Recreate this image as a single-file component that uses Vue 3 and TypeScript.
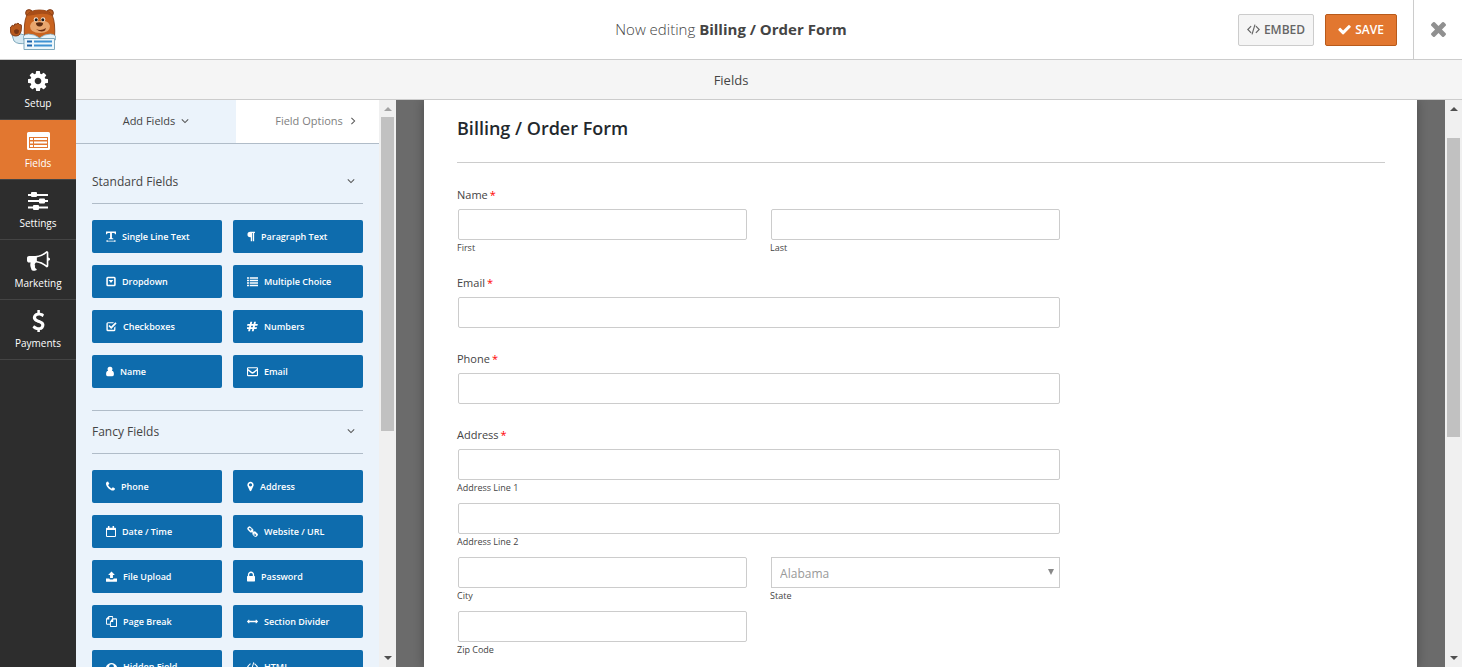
<script setup lang="ts">
import { ref } from 'vue'

interface Icon {
  box: string
  width: number
  d: string
  evenodd?: boolean
}

interface FieldButton {
  label: string
  icon: string
}

interface FieldGroup {
  title: string
  fields: FieldButton[]
}

interface NavItem {
  label: string
  icon: string
}

const navItems: NavItem[] = [
  { label: 'Setup', icon: 'gear' },
  { label: 'Fields', icon: 'list' },
  { label: 'Settings', icon: 'sliders' },
  { label: 'Marketing', icon: 'bullhorn' },
  { label: 'Payments', icon: 'dollar' },
]

const navIcons: Record<string, Icon> = {
  gear: {
    box: '128 128 1536 1536',
    width: 20,
    d: 'M1152 896q0-106-75-181t-181-75-181 75-75 181 75 181 181 75 181-75 75-181zm512-109v222q0 12-8 23t-20 13l-185 28q-19 54-39 91 35 50 107 138 10 12 10 25t-9 23q-27 37-99 108t-94 71q-12 0-26-9l-138-108q-44 23-91 38-16 136-29 186-7 28-36 28h-222q-14 0-24.5-8.5t-11.5-21.5l-28-184q-49-16-90-37l-141 107q-10 9-25 9-14 0-25-11-126-114-165-168-7-10-7-23 0-12 8-23 15-21 51-66.500t54-70.500q-27-50-41-99l-183-27q-13-2-21-12.500t-8-23.500v-222q0-12 8-23t19-13l186-28q14-46 39-92-40-57-107-138-10-12-10-24 0-10 9-23 26-36 98.500-107.500t94.500-71.500q13 0 26 10l138 107q44-23 91-38 16-136 29-186 7-28 36-28h222q14 0 24.500 8.500t11.500 21.500l28 184q49 16 90 37l142-107q9-9 24-9 13 0 25 10 129 119 165 170 7 8 7 22 0 12-8 23-15 21-51 66.500t-54 70.500q26 50 41 98l183 28q13 2 21 12.500t8 23.500z',
  },
  list: {
    box: '0 0 23 18',
    width: 23,
    evenodd: true,
    d: 'M1.500 0h20a1.500 1.500 0 0 1 1.500 1.500v15a1.500 1.500 0 0 1-1.500 1.500h-20a1.500 1.500 0 0 1-1.500-1.500v-15a1.500 1.500 0 0 1 1.500-1.500zM2 5v11h19v-11zM3 6h3v2h-3zM7 6h13v2h-13zM3 9.500h3v2h-3zM7 9.500h13v2h-13zM3 13h3v2h-3zM7 13h13v2h-13z',
  },
  sliders: {
    box: '0 0 20 18',
    width: 20,
    d: 'M0 2h3v2h-3zM9 2h11v2h-11zM4 0h4a1 1 0 0 1 1 1v3a1 1 0 0 1-1 1h-4a1 1 0 0 1-1-1v-3a1 1 0 0 1 1-1zM0 8h11v2h-11zM17 8h3v2h-3zM12 6.500h4a1 1 0 0 1 1 1v3a1 1 0 0 1-1 1h-4a1 1 0 0 1-1-1v-3a1 1 0 0 1 1-1zM0 14.500h5v2h-5zM11 14.500h9v2h-9zM6 13h4a1 1 0 0 1 1 1v3a1 1 0 0 1-1 1h-4a1 1 0 0 1-1-1v-3a1 1 0 0 1 1-1z',
  },
  bullhorn: {
    box: '0 128 1792 1536',
    width: 23,
    d: 'M1664 640q53 0 90.500 37.500t37.500 90.500-37.500 90.500-90.500 37.500v384q0 52-38 90t-90 38q-417-347-812-380-58 19-91 66t-31 100.500 40 92.500q-20 33-23 65.500t6 58 33.500 55 48 50 61.500 50.500q-29 58-111.500 83t-168.500 11.500-132-55.500q-7-23-29.500-87.500t-32-94.500-23-89-15-101 3.500-98.500 22-110.500h-122q-66 0-113-47t-47-113v-192q0-66 47-113t113-47h480q435 0 896-384 52 0 90 38t38 90v384zm-128 604v-954q-394 302-768 343v270q377 42 768 341z',
  },
  dollar: {
    box: '384 0 1024 1792',
    width: 13,
    d: 'M1362 1185q0 153-99.500 263.500t-258.500 136.500v175q0 14-9 23t-23 9h-135q-13 0-22.500-9.500t-9.500-22.500v-175q-66-9-127.500-31t-101.500-44.500-74-48-46.500-37.500-17.500-18q-17-21-2-41l103-135q7-10 23-12 15-2 24 9l2 2q113 99 243 125 37 8 74 8 81 0 142.500-43t61.500-122q0-28-15-53t-33.500-42-58.500-37.500-66-32-80-32.500q-39-16-61.500-25t-61.500-26.500-62.500-31-56.500-35.500-53.500-42.500-43.500-49-35.500-58-21-66.500-8.500-78q0-138 98-242t255-134v-180q0-13 9.500-22.500t22.500-9.500h135q14 0 23 9t9 23v176q57 6 110.500 23t87 33.500 63.500 37.500 39 29 15 14q17 18 5 38l-81 146q-8 15-23 16-14 3-27-7-3-3-14.500-12t-39-26.500-58.500-32-74.500-26-85.500-11.500q-95 0-155 43t-60 111q0 26 8.500 48t29.500 41.500 39.500 33 56 31 60.500 27 70 27.500q53 20 81 31.500t76 35 75.500 42.500 62 50 53 63.500 31.500 76.500 13 94z',
  },
}

const fieldIcons: Record<string, Icon> = {
  text: {
    box: '0 0 13 14',
    width: 10,
    d: 'M0 0.500h13v3.500h-1.200q-.3-1.700-1.800-1.700h-2.300v6.200q0 1 1.800 1v1h-6v-1q1.800 0 1.800-1v-6.200h-2.300q-1.500 0-1.800 1.700h-1.200zM0 13l2-1.700v1.100h9v-1.100l2 1.700-2 1.500v-1h-9v1z',
  },
  paragraph: {
    box: '0 0 10 14',
    width: 8,
    d: 'M4 1h6v1.500h-1v10.500h-1.700v-10.500h-.9v10.500h-1.700v-5h-.7a3.500 3.500 0 0 1 0-7z',
  },
  dropdown: {
    box: '0 0 12 14',
    width: 10,
    evenodd: true,
    d: 'M2 1h8a2 2 0 0 1 2 2v8a2 2 0 0 1-2 2h-8a2 2 0 0 1-2-2v-8a2 2 0 0 1 2-2zM2 3v8h8v-8zM3 5h6l-3 4z',
  },
  choices: {
    box: '0 0 14 14',
    width: 11,
    d: 'M0 1.500h2.500v2h-2.500zM3.500 1.500h10.500v2h-10.500zM0 4.800h2.500v2h-2.500zM3.500 4.800h10.500v2h-10.500zM0 8h2.500v2h-2.500zM3.500 8h10.500v2h-10.500zM0 11.200h2.500v2h-2.500zM3.500 11.200h10.500v2h-10.500z',
  },
  check: {
    box: '0 0 13 14',
    width: 11,
    d: 'M2 1.500h7.500l-1 1.500h-6.700v8.200h8v-2.700l1.700-1.700v4.200a2 2 0 0 1-2 2h-7.500a2 2 0 0 1-2-2v-7.500a2 2 0 0 1 2-2zM2.500 6.500l1.500-1.500 2.100 2.100 5.300-5.400 1.600 1.600-6.900 7z',
  },
  hash: {
    box: '0 0 14 14',
    width: 11,
    evenodd: true,
    d: 'M4.300 1h2.400l-.7 2.800h2.300l.7-2.800h2.400l-.7 2.800h3.100l-.6 2.400h-3l-.4 1.600h3l-.6 2.400h-3l-.7 2.800h-2.400l.7-2.800h-2.300l-.7 2.800h-2.400l.7-2.800h-3.100l.6-2.400h3l.4-1.600h-3l.6-2.400h3zM5.400 6.200l-.4 1.600h2.300l.4-1.600z',
  },
  user: {
    box: '0 0 10 14',
    width: 8,
    d: 'M5 1a3 3 0 0 1 2.400 5q2.600.3 2.600 4.500 0 2.500-2 2.500h-6q-2 0-2-2.500 0-4.200 2.600-4.500a3 3 0 0 1 2.400-5z',
  },
  envelope: {
    box: '0 0 14 14',
    width: 11,
    evenodd: true,
    d: 'M1.500 1.500h11a1.500 1.500 0 0 1 1.500 1.500v8.500a1.500 1.500 0 0 1-1.500 1.500h-11a1.500 1.500 0 0 1-1.500-1.500v-8.500a1.500 1.500 0 0 1 1.500-1.500zM1.400 2.900v.9l4.600 3.600q1 .7 2 0l4.600-3.600v-.9zM1.400 6v5.600h11.200v-5.600l-3.900 3.200q-1.700 1.200-3.400 0z',
  },
  phone: {
    box: '192 128 1408 1536',
    width: 9,
    d: 'M1600 1240q0 27-10 70.500t-21 68.500q-21 50-122 106-94 51-186 51-27 0-53-3.500t-57.500-12.500-47-14.500-55.500-20.500-49-18q-98-35-175-83-127-79-264-216t-216-264q-48-77-83-175-3-9-18-49t-20.500-55.500-14.500-47-12.500-57.500-3.500-53q0-92 51-186 56-101 106-122 25-11 68.500-21t70.500-10q14 0 21 3 18 6 53 76 11 19 30 54t35 63.500 31 53.500q3 4 17.500 25t21.500 35.500 7 28.500q0 20-28.500 50t-62 55-62 53-28.500 46q0 9 5 22.500t8.500 20.500 14 24 11.500 19q76 137 174 235t235 174q2 1 19 11.500t24 14 20.500 8.500 22.500 5q18 0 46-28.500t53-62 55-62 50-28.500q14 0 28.500 7t35.500 21.500 25 17.500q25 15 53.500 31t63.500 35 54 30q70 35 76 53 3 7 3 21z',
  },
  marker: {
    box: '384 0 1024 1792',
    width: 7,
    d: 'M1152 640q0-106-75-181t-181-75-181 75-75 181 75 181 181 75 181-75 75-181zm256 0q0 109-33 179l-364 774q-16 33-47.500 52t-67.500 19-67.500-19-46.500-52l-365-774q-33-70-33-179 0-212 150-362t362-150 362 150 150 362z',
  },
  calendar: {
    box: '0 0 13 14',
    width: 10,
    evenodd: true,
    d: 'M2.500 0h2v2h4v-2h2v2h1.500a1 1 0 0 1 1 1v10a1 1 0 0 1-1 1h-11a1 1 0 0 1-1-1v-10a1 1 0 0 1 1-1h1.500zM1.300 5v7.700h10.400v-7.700z',
  },
  link: {
    box: '0 0 14 14',
    width: 11,
    evenodd: true,
    d: 'M4 .5l3.500 3.200q1.200 1.300.3 2.700l.8.800q1.500-.9 2.700.3l2 2q1.300 1.500 0 2.800l-1 1q-1.400 1.200-2.800 0l-2-2q-1.200-1.300-.3-2.700l-.8-.8q-1.500.9-2.700-.3l-2.800-2.800q-1.200-1.500 0-2.800l1-1.100q1-.9 2.100-.3zM3.300 2.200l-1.200 1.200 2.700 2.700.6-.3-.8-1 .8-.8 1 .8.200-.7zM9.600 8.800l-.2.600.9.900-.8.800-.9-.9-.2.700 2 2 1.300-1.200z',
  },
  upload: {
    box: '0 0 14 14',
    width: 11,
    d: 'M7 .5l4.300 4.500h-2.500v4h-3.600v-4h-2.500zM0 9.500h4.200q.3 1.300 1.500 1.300h2.600q1.200 0 1.500-1.300h4.200v3.500a.7.7 0 0 1-.7.700h-12.600a.7.7 0 0 1-.7-.7z',
  },
  lock: {
    box: '320 128 1152 1408',
    width: 8,
    d: 'M640 768h512v-192q0-106-75-181t-181-75-181 75-75 181v192zm832 96v576q0 40-28 68t-68 28h-960q-40 0-68-28t-28-68v-576q0-40 28-68t68-28h32v-192q0-184 132-316t316-132 316 132 132 316v192h32q40 0 68 28t28 68z',
  },
  copy: {
    box: '0 0 14 14',
    width: 11,
    evenodd: true,
    d: 'M3.500 0h4.500a1 1 0 0 1 1 1v2h4a1 1 0 0 1 1 1v9a1 1 0 0 1-1 1h-7a1 1 0 0 1-1-1v-2h-4a1 1 0 0 1-1-1v-6.500zM4.200 1.300v3h-3v5.500h3.800v-2.500l3-4v-2zM9.200 4.300v3.200h-3v5.200h6.500v-8.400z',
  },
  arrows: {
    box: '0 448 1792 896',
    width: 11,
    d: 'M1792 896q0 26-19 45l-256 256q-19 19-45 19t-45-19-19-45v-128h-1024v128q0 26-19 45t-45 19-45-19l-256-256q-19-19-19-45t19-45l256-256q19-19 45-19t45 19 19 45v128h1024v-128q0-26 19-45t45-19 45 19l256 256q19 19 19 45z',
  },
  eye: {
    box: '0 0 14 14',
    width: 11,
    evenodd: true,
    d: 'M7 2.500q4.500 0 7 4.500-2.500 4.500-7 4.500t-7-4.500q2.500-4.500 7-4.500zM7 4a3 3 0 1 0 0 6 3 3 0 0 0 0-6z',
  },
  code: {
    box: '0 0 14 14',
    width: 11,
    d: 'M4 3l.9.9-3.100 3.100 3.100 3.100-.9.900-4-4zM10 3l4 4-4 4-.9-.9 3.100-3.100-3.100-3.100zM8 1.500l1.200.3-3.200 10.700-1.200-.3z',
  },
}

const groups: FieldGroup[] = [
  {
    title: 'Standard Fields',
    fields: [
      { label: 'Single Line Text', icon: 'text' },
      { label: 'Paragraph Text', icon: 'paragraph' },
      { label: 'Dropdown', icon: 'dropdown' },
      { label: 'Multiple Choice', icon: 'choices' },
      { label: 'Checkboxes', icon: 'check' },
      { label: 'Numbers', icon: 'hash' },
      { label: 'Name', icon: 'user' },
      { label: 'Email', icon: 'envelope' },
    ],
  },
  {
    title: 'Fancy Fields',
    fields: [
      { label: 'Phone', icon: 'phone' },
      { label: 'Address', icon: 'marker' },
      { label: 'Date / Time', icon: 'calendar' },
      { label: 'Website / URL', icon: 'link' },
      { label: 'File Upload', icon: 'upload' },
      { label: 'Password', icon: 'lock' },
      { label: 'Page Break', icon: 'copy' },
      { label: 'Section Divider', icon: 'arrows' },
      { label: 'Hidden Field', icon: 'eye' },
      { label: 'HTML', icon: 'code' },
    ],
  },
]

const activeNav = ref('Fields')
const state = ref('Alabama')
</script>

<template>
  <div class="builder">
    <header class="topbar">
      <svg class="logo" viewBox="0 0 46 42" aria-label="Logo">
        <circle cx="19" cy="4" r="3.400" fill="#b85a1e" stroke="#7a3714" stroke-width=".9" />
        <circle cx="40" cy="4" r="3.400" fill="#b85a1e" stroke="#7a3714" stroke-width=".9" />
        <path d="M2 26q6 1 9-1l6 2-1 7q-8 2-12-2z" fill="#d5e8f1" stroke="#7fa9bd" stroke-width="1" />
        <path d="M14.500 29q-1-15 2-22 3-6 13-6t13 6q3 7 2 22z" fill="#c9631f" stroke="#8a3f14" stroke-width=".9" />
        <path d="M17 7q3-6 12.500-6t12.500 6q-6-3-12.500-2t-12.500 2z" fill="#a84d18" />
        <path d="M20 17q1-4 4-5h11q4 1 5 5 0 7-10 7t-10-7z" fill="#e9a66e" />
        <circle cx="26" cy="10.500" r="2.300" fill="#f6e3d3" />
        <circle cx="33" cy="10.500" r="2.300" fill="#f6e3d3" />
        <circle cx="26.200" cy="10.700" r="1.500" fill="#1c1c1c" />
        <circle cx="32.800" cy="10.700" r="1.500" fill="#1c1c1c" />
        <path d="M26 14q3.500-1.500 7 0 0 3.200-3.500 3.500-3.500-.3-3.500-3.500z" fill="#5c2b12" />
        <path d="M26 20q5 2.500 10-1l-1 2.500q-3 1.500-6 .5z" fill="#6b2d12" />
        <path d="M1 18q1-3 3-1 0-3 2.500-2 1.500-2 3 .5 2.500-.5 2 2.500 0 9-5.500 9t-5.500-5q-1.500-4 .5-4z" fill="#b85a1e" stroke="#7a3714" stroke-width=".9" />
        <path d="M4 21.500q2.500-2.500 5 0 0 3.500-2.500 3.500t-2.500-3.500z" fill="#7a3714" />
        <path d="M13.500 27q2-2 5-2 6 0 11 4 5-4 11-4 3 0 5 2v4h-32z" fill="#e7f3f9" stroke="#7fa9bd" stroke-width=".8" />
        <path d="M14 29.500h30.500v11h-30.500z" fill="#eef7fb" stroke="#7fa9bd" stroke-width="1" />
        <path d="M17 31.500h5v2h-5zM17 35.500h5v2h-5z" fill="#1d62a8" />
        <path d="M24 31.500h18v2h-18zM24 35.500h18v2h-18z" fill="#3f92d2" />
      </svg>
      <h1 class="heading">Now editing <strong>Billing / Order Form</strong></h1>
      <div class="actions">
        <button type="button" class="btn embed">
          <svg viewBox="0 0 14 14" aria-hidden="true"><path :d="fieldIcons.code.d" /></svg>
          EMBED
        </button>
        <button type="button" class="btn save">
          <svg viewBox="90 200 1600 1400" aria-hidden="true">
            <path d="M1671 566q0 40-28 68l-724 724-136 136q-28 28-68 28t-68-28l-136-136-362-362q-28-28-28-68t28-68l136-136q28-28 68-28t68 28l294 295 656-657q28-28 68-28t68 28l136 136q28 28 28 68z" />
          </svg>
          SAVE
        </button>
        <button type="button" class="close" aria-label="Close">
          <svg viewBox="302 366 1188 1188" aria-hidden="true">
            <path d="M1490 1322q0 40-28 68l-136 136q-28 28-68 28t-68-28l-294-294-294 294q-28 28-68 28t-68-28l-136-136q-28-28-28-68t28-68l294-294-294-294q-28-28-28-68t28-68l136-136q28-28 68-28t68 28l294 294 294-294q28-28 68-28t68 28l136 136q28 28 28 68t-28 68l-294 294 294 294q28 28 28 68z" />
          </svg>
        </button>
      </div>
    </header>

    <div class="body">
      <nav class="sidenav">
        <button
          v-for="item in navItems"
          :key="item.label"
          type="button"
          :class="['nav-item', { active: item.label === activeNav }]"
          @click="activeNav = item.label"
        >
          <span class="nav-icon">
            <svg :viewBox="navIcons[item.icon].box" :width="navIcons[item.icon].width" aria-hidden="true">
              <path :d="navIcons[item.icon].d" :fill-rule="navIcons[item.icon].evenodd ? 'evenodd' : 'nonzero'" />
            </svg>
          </span>
          {{ item.label }}
        </button>
      </nav>

      <div class="main">
        <h2 class="section-bar">Fields</h2>

        <div class="workspace">
          <aside class="panel">
            <div class="tabs">
              <button type="button" class="tab current">
                Add Fields
                <svg viewBox="0 0 10 10" aria-hidden="true"><path d="M1 3l4 4 4-4" /></svg>
              </button>
              <button type="button" class="tab">
                Field Options
                <svg viewBox="0 0 10 10" aria-hidden="true"><path d="M3 1l4 4-4 4" /></svg>
              </button>
            </div>
            <div class="groups">
              <section v-for="group in groups" :key="group.title" class="group">
                <h3 class="group-title">
                  {{ group.title }}
                  <svg viewBox="0 0 10 10" aria-hidden="true"><path d="M1 3l4 4 4-4" /></svg>
                </h3>
                <div class="field-grid">
                  <button v-for="field in group.fields" :key="field.label" type="button" class="field-btn">
                    <svg
                      :viewBox="fieldIcons[field.icon].box"
                      :width="fieldIcons[field.icon].width"
                      height="11"
                      aria-hidden="true"
                    >
                      <path
                        :d="fieldIcons[field.icon].d"
                        :fill-rule="fieldIcons[field.icon].evenodd ? 'evenodd' : 'nonzero'"
                      />
                    </svg>
                    {{ field.label }}
                  </button>
                </div>
              </section>
            </div>
            <div class="scrollbar panel-scroll" aria-hidden="true">
              <i class="arrow up faded"></i>
              <i class="thumb"></i>
              <i class="arrow down"></i>
            </div>
          </aside>

          <main class="preview">
            <form class="sheet" @submit.prevent>
              <h2 class="form-title">Billing / Order Form</h2>

              <fieldset class="field with-sub">
                <legend class="label">Name<span class="req">*</span></legend>
                <div class="row">
                  <div class="cell">
                    <input id="first" type="text" />
                    <label class="sub" for="first">First</label>
                  </div>
                  <div class="cell">
                    <input id="last" type="text" />
                    <label class="sub" for="last">Last</label>
                  </div>
                </div>
              </fieldset>

              <div class="field">
                <label class="label" for="email">Email<span class="req">*</span></label>
                <input id="email" type="email" />
              </div>

              <div class="field">
                <label class="label" for="phone">Phone<span class="req">*</span></label>
                <input id="phone" type="tel" />
              </div>

              <fieldset class="field with-sub">
                <legend class="label">Address<span class="req">*</span></legend>
                <div class="row">
                  <div class="cell wide">
                    <input id="line1" type="text" />
                    <label class="sub" for="line1">Address Line 1</label>
                  </div>
                  <div class="cell wide">
                    <input id="line2" type="text" />
                    <label class="sub" for="line2">Address Line 2</label>
                  </div>
                  <div class="cell">
                    <input id="city" type="text" />
                    <label class="sub" for="city">City</label>
                  </div>
                  <div class="cell">
                    <div class="select-wrap">
                      <select id="state" v-model="state">
                        <option>Alabama</option>
                      </select>
                      <svg viewBox="0 0 6 6" aria-hidden="true"><path d="M0 0h6l-3 6z" /></svg>
                    </div>
                    <label class="sub" for="state">State</label>
                  </div>
                  <div class="cell">
                    <input id="zip" type="text" />
                    <label class="sub" for="zip">Zip Code</label>
                  </div>
                </div>
              </fieldset>
            </form>
            <div class="scrollbar preview-scroll" aria-hidden="true">
              <i class="arrow up"></i>
              <i class="thumb"></i>
              <i class="arrow down"></i>
            </div>
          </main>
        </div>
      </div>
    </div>
  </div>
</template>

<style>
body {
  margin: 0;
}
</style>

<style scoped>
.builder {
  display: flex;
  flex-direction: column;
  height: 100vh;
  overflow: hidden;
  font-family: 'Open Sans', 'Noto Sans', sans-serif;
  color: #444;
  background: #fff;
}

.builder *,
.builder *::before {
  box-sizing: border-box;
}

button,
input,
select {
  font-family: inherit;
  margin: 0;
}

button {
  cursor: pointer;
}

h1,
h2,
h3 {
  margin: 0;
  font-weight: 400;
}

/* Top bar */
.topbar {
  display: grid;
  grid-template-columns: 1fr auto 1fr;
  align-items: center;
  flex: none;
  height: 60px;
  border-bottom: 1px solid #ccc;
}

.logo {
  width: 46px;
  height: 42px;
  margin-left: 10px;
}

.heading {
  padding-bottom: 2px;
  font-size: 15px;
  font-weight: 300;
  line-height: 20px;
}

.heading strong {
  font-weight: 700;
}

.actions {
  display: flex;
  justify-content: flex-end;
  align-items: center;
  align-self: stretch;
}

.btn {
  display: flex;
  align-items: center;
  justify-content: center;
  gap: 4px;
  height: 32px;
  padding: 0 7px;
  border: 1px solid #ccc;
  border-radius: 2px;
  font-size: 12px;
  font-weight: 600;
  white-space: nowrap;
}

.btn svg {
  width: 13px;
  height: 13px;
  fill: currentColor;
}

.embed {
  min-width: 76px;
  margin-right: 11px;
  background: #f5f5f5;
  color: #666;
}

.save {
  min-width: 72px;
  margin-right: 16px;
  background: #e27730;
  border-color: #b85a1b;
  color: #fff;
}

.close {
  display: flex;
  align-items: center;
  justify-content: center;
  align-self: stretch;
  width: 49px;
  padding: 0;
  border: 0;
  border-left: 1px solid #ccc;
  background: none;
}

.close svg {
  width: 15px;
  height: 15px;
  fill: #909090;
}

/* Side navigation */
.body {
  display: flex;
  flex: 1;
  min-height: 0;
}

.sidenav {
  flex: none;
  width: 76px;
  background: #2d2d2d;
}

.nav-item {
  display: flex;
  flex-direction: column;
  align-items: center;
  width: 100%;
  height: 60px;
  padding: 7px 0 0;
  border: 0;
  border-bottom: 1px solid #444;
  background: none;
  color: #fff;
  font-size: 10px;
  font-weight: 500;
  line-height: 16px;
}

.nav-item.active {
  background: #e27730;
}

.nav-icon {
  display: flex;
  align-items: center;
  justify-content: center;
  height: 28px;
}

.nav-icon svg {
  fill: #fff;
}

.main {
  display: flex;
  flex-direction: column;
  flex: 1;
  min-width: 0;
}

.section-bar {
  flex: none;
  height: 40px;
  padding-right: 76px;
  border-bottom: 1px solid #ccc;
  background: #f5f5f5;
  font-size: 13px;
  line-height: 40px;
  text-align: center;
}

.workspace {
  display: flex;
  flex: 1;
  min-height: 0;
}

/* Field palette */
.panel {
  position: relative;
  flex: none;
  width: 320px;
  overflow: hidden;
  background: #ebf3fb;
}

.tabs {
  display: flex;
  height: 44px;
  border-bottom: 1px solid #b0bcc8;
}

.tab {
  display: flex;
  flex: 1;
  align-items: center;
  justify-content: center;
  gap: 6px;
  padding: 0 0 2px;
  border: 0;
  background: #fff;
  color: #808080;
  font-size: 11px;
}

.tab.current {
  background: #ebf3fb;
  color: #444;
}

.tab svg,
.group-title svg {
  width: 8px;
  height: 8px;
  fill: none;
  stroke: #555;
  stroke-width: 1.3;
}

.groups {
  padding: 17px 33px 0 16px;
}

.group-title {
  display: flex;
  align-items: center;
  justify-content: space-between;
  height: 43px;
  padding: 0 8px 2px 0;
  border-bottom: 1px solid #b0bcc8;
  font-size: 12px;
}

.group + .group {
  margin-top: 22px;
  border-top: 1px solid #b0bcc8;
}

.field-grid {
  display: grid;
  grid-template-columns: 1fr 1fr;
  gap: 12px 11px;
  padding-top: 16px;
}

.field-btn {
  display: flex;
  align-items: center;
  gap: 6px;
  height: 33px;
  padding: 0 0 0 14px;
  border: 0;
  border-radius: 2px;
  background: #0e6cad;
  color: #fff;
  font-size: 9px;
  font-weight: 600;
  white-space: nowrap;
}

.field-btn svg {
  flex: none;
  fill: #fff;
}

/* Scroll bars lie over the right edge of their pane */
.scrollbar {
  position: absolute;
  inset: 0 0 0 auto;
  display: flex;
  flex-direction: column;
  align-items: center;
  width: 17px;
  background: #f0f0f0;
}

.arrow {
  flex: none;
  width: 0;
  height: 0;
  border: 4px solid transparent;
}

.arrow.up {
  margin-top: 3px;
  border-bottom-color: #505050;
}

.arrow.faded {
  border-bottom-color: #a3a3a3;
}

.arrow.down {
  margin-top: auto;
  margin-bottom: 3px;
  border-top-color: #505050;
}

.thumb {
  width: 13px;
  background: #c1c1c1;
}

.panel-scroll .thumb {
  height: 314px;
  margin-top: 6px;
}

.preview-scroll .thumb {
  height: 299px;
  margin-top: 27px;
}

/* Form preview */
.preview {
  position: relative;
  flex: 1;
  min-width: 0;
  padding: 0 45px 0 28px;
  overflow: hidden;
  background: #6b6b6b;
}

.sheet {
  min-height: 100%;
  padding: 13px 32px 0 33px;
  background: #fff;
  box-shadow: 0 0 10px rgba(0, 0, 0, 0.3);
}

.form-title {
  padding-bottom: 19px;
  margin-bottom: 23px;
  border-bottom: 1px solid #ccc;
  color: #23282d;
  font-size: 18px;
  font-weight: 600;
  line-height: 30px;
}

.field {
  width: 65%;
  min-width: 0;
  margin: 0 0 22px;
  padding: 0;
  border: 0;
}

.with-sub {
  margin-bottom: 17px;
}

.label {
  display: block;
  padding: 0;
  margin-bottom: 5px;
  font-size: 11px;
  font-weight: 500;
  line-height: 18px;
}

.req {
  margin-left: 2px;
  color: #f00;
  font-weight: 400;
}

.row {
  display: grid;
  grid-template-columns: 1fr 1fr;
  gap: 6px 23px;
}

.cell {
  min-width: 0;
}

.wide {
  grid-column: 1 / -1;
}

input,
.select-wrap {
  display: block;
  width: calc(100% - 1px);
  height: 31px;
  margin-left: 1px;
}

input {
  padding: 0 8px;
  border: 1px solid #ccc;
  border-radius: 2px;
  background: #fff;
}

.select-wrap {
  position: relative;
}

select {
  width: 100%;
  height: 100%;
  padding: 2px 8px 0;
  border: 1px solid #ccc;
  border-radius: 0;
  background: #fff;
  color: #999;
  font-size: 12px;
  appearance: none;
}

.select-wrap svg {
  position: absolute;
  top: 12px;
  right: 6px;
  width: 6px;
  height: 6px;
  fill: #888;
  pointer-events: none;
}

.sub {
  display: block;
  margin-bottom: 2px;
  font-size: 9px;
  line-height: 15px;
}
</style>
